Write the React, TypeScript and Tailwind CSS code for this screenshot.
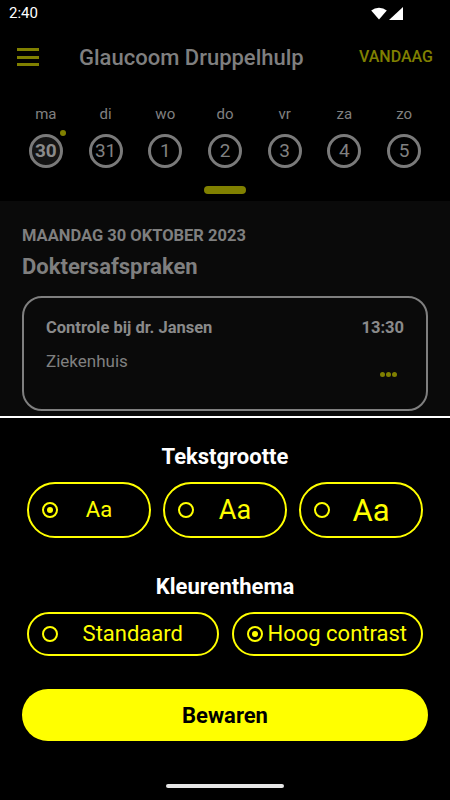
import React, { useState } from 'react';

const days = [
  { label: 'ma', num: '30', today: true },
  { label: 'di', num: '31' },
  { label: 'wo', num: '1' },
  { label: 'do', num: '2' },
  { label: 'vr', num: '3' },
  { label: 'za', num: '4' },
  { label: 'zo', num: '5' },
];

const sizes = [
  { id: 's', className: 'text-[22px]' },
  { id: 'm', className: 'text-[27px]' },
  { id: 'l', className: 'text-[31px]' },
];

const Radio: React.FC<{ checked: boolean }> = ({ checked }) => (
  <span className="flex h-[16px] w-[16px] shrink-0 items-center justify-center rounded-full border-2 border-[#ffff00]">
    {checked && <span className="h-[6px] w-[6px] rounded-full bg-[#ffff00]" />}
  </span>
);

const StatusBar: React.FC = () => (
  <div className="flex h-[26px] items-center justify-between pl-[9px] pr-[47px] text-white">
    <span className="text-[15px] leading-none">2:40</span>
    <div className="flex items-center gap-[2px]">
      <svg width="16" height="13" viewBox="0 0 16 13">
        <path d="M8 12.5 L0.2 3.6 A12 12 0 0 1 15.8 3.6 Z" fill="#ffffff" />
      </svg>
      <svg width="14" height="13" viewBox="0 0 14 13">
        <path d="M14 0 L14 13 L0 13 Z" fill="#ffffff" />
      </svg>
    </div>
  </div>
);

const App: React.FC = () => {
  const [textSize, setTextSize] = useState('s');
  const [theme, setTheme] = useState<'standaard' | 'hoog'>('hoog');

  return (
    <div className="flex h-[800px] w-[450px] flex-col overflow-hidden bg-black font-['Roboto',sans-serif]">
      <StatusBar />

      {/* header */}
      <div className="flex h-[62px] items-center pl-[17px] pr-[17px]">
        <button className="flex w-[22px] flex-col gap-[4.5px]">
          <span className="h-[3px] w-[22px] bg-[#808000]" />
          <span className="h-[3px] w-[22px] bg-[#808000]" />
          <span className="h-[3px] w-[22px] bg-[#808000]" />
        </button>
        <h1 className="ml-[40px] text-[22px] font-medium text-[#7f7f7f]">Glaucoom Druppelhulp</h1>
        <button className="ml-auto text-[16px] font-medium text-[#808000]">VANDAAG</button>
      </div>

      {/* week */}
      <div className="px-[16px] pt-[16px]">
        <div className="grid grid-cols-7">
          {days.map(d => (
            <div key={d.num} className="flex flex-col items-center">
              <span className="h-[20px] text-[15px] leading-[20px] text-[#808080]">{d.label}</span>
              <div className="relative mt-[10px]">
                <div
                  className={
                    d.today
                      ? 'flex h-[34px] w-[34px] items-center justify-center rounded-full border-[3px] border-[#7a7a7a] bg-[#141414] text-[19px] font-bold text-[#8a8a8a]'
                      : 'flex h-[34px] w-[34px] items-center justify-center rounded-full border-[3px] border-[#7a7a7a] text-[19px] text-[#808080]'
                  }
                >
                  {d.num}
                </div>
                {d.today && <span className="absolute right-[-3px] top-[-4px] h-[6px] w-[6px] rounded-full bg-[#808000]" />}
              </div>
            </div>
          ))}
        </div>
        <div className="mx-auto mt-[18px] h-[8px] w-[42px] rounded-full bg-[#808000]" />
        <div className="h-[7px]" />
      </div>

      {/* day content */}
      <div className="h-[215px] bg-[#0a0a0a] px-[22px] pt-[25px]">
        <div className="text-[16.5px] font-bold leading-[20px] text-[#7f7f7f]">MAANDAG 30 OKTOBER 2023</div>
        <div className="mt-[9px] text-[22px] font-bold leading-[24px] text-[#7f7f7f]">Doktersafspraken</div>
        <div className="mt-[17px] h-[115px] rounded-[20px] border-2 border-[#7f7f7f] px-[22px] pt-[20px]">
          <div className="flex items-center justify-between text-[16.5px] font-bold leading-[20px] text-[#8a8a8a]">
            <span>Controle bij dr. Jansen</span>
            <span>13:30</span>
          </div>
          <div className="mt-[13px] text-[17px] leading-[20px] text-[#808080]">Ziekenhuis</div>
          <div className="mt-[1px] flex justify-end gap-[1px] pr-[7px]">
            <span className="h-[5px] w-[5px] rounded-full bg-[#808000]" />
            <span className="h-[5px] w-[5px] rounded-full bg-[#808000]" />
            <span className="h-[5px] w-[5px] rounded-full bg-[#808000]" />
          </div>
        </div>
      </div>

      {/* settings sheet */}
      <div className="flex flex-1 flex-col border-t-2 border-white bg-black px-[27px] pt-[27px]">
        <h2 className="text-center text-[22px] font-bold leading-[24px] text-white">Tekstgrootte</h2>
        <div className="mt-[13px] grid grid-cols-3 gap-3">
          {sizes.map(s => (
            <button
              key={s.id}
              onClick={() => setTextSize(s.id)}
              className="flex h-[56px] items-center rounded-full border-2 border-[#ffff00] pl-[13px] pr-[9px] text-[#ffff00]"
            >
              <Radio checked={textSize === s.id} />
              <span className={`flex-1 text-center leading-none ${s.className}`}>Aa</span>
            </button>
          ))}
        </div>

        <h2 className="mt-[37px] text-center text-[22px] font-bold leading-[24px] text-white">Kleurenthema</h2>
        <div className="mt-[13px] grid grid-cols-2 gap-[13px]">
          <button
            onClick={() => setTheme('standaard')}
            className="flex h-[44px] items-center rounded-full border-2 border-[#ffff00] pl-[13px] pr-[9px] text-[#ffff00]"
          >
            <Radio checked={theme === 'standaard'} />
            <span className="flex-1 text-center text-[22px] leading-none">Standaard</span>
          </button>
          <button
            onClick={() => setTheme('hoog')}
            className="flex h-[44px] items-center rounded-full border-2 border-[#ffff00] pl-[13px] pr-[9px] text-[#ffff00]"
          >
            <Radio checked={theme === 'hoog'} />
            <span className="flex-1 text-center text-[22px] leading-none">Hoog contrast</span>
          </button>
        </div>

        <button className="mx-[-5px] mt-[33px] h-[52px] rounded-full bg-[#ffff00] text-[22px] font-bold text-black">
          Bewaren
        </button>

        <div className="mx-auto mt-[43px] h-[4px] w-[118px] rounded-full bg-[#e6e6e6]" />
      </div>
    </div>
  );
};

export default App;
